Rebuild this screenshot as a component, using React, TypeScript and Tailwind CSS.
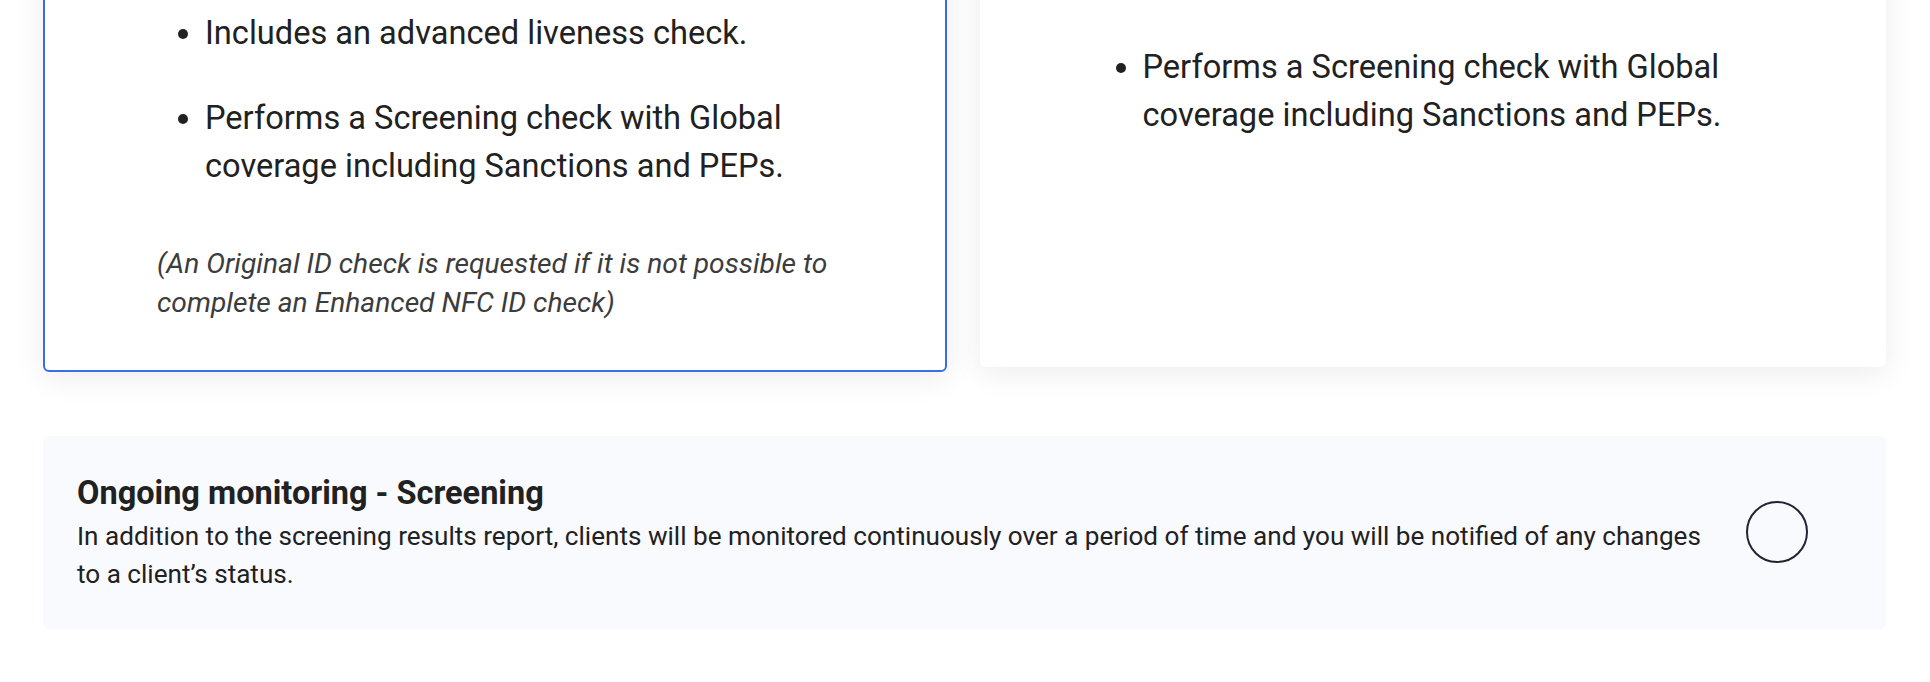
export default function App() {
  return (
    <div className="min-h-screen overflow-hidden bg-white font-['Roboto',sans-serif] text-[#212121]">
      <div className="px-[43px] pr-[44px]">
        <div className="-mt-[40px] flex items-start gap-[33px]">
          <div className="flex-1 rounded-md border-2 border-[#3b6ee6] bg-white pt-[47px] pb-[48px] pl-[112px] pr-[96px] shadow-[0_6px_30px_rgba(0,0,0,0.08)]">
            <ul className="list-disc pl-12 text-[32.6px] leading-[48px]">
              <li>Includes an advanced liveness check.</li>
              <li className="mt-[37px]">Performs a Screening check with Global coverage including Sanctions and PEPs.</li>
            </ul>
            <p className="mt-[54px] text-[28.2px] italic leading-[39px] text-[#3c3c3c]">
              (An Original ID check is requested if it is not possible to complete an Enhanced NFC ID check)
            </p>
          </div>
          <div className="flex-1 rounded-md bg-white pt-[83px] pb-[228px] pl-[115px] pr-[100px] shadow-[0_6px_30px_rgba(0,0,0,0.08)]">
            <ul className="list-disc pl-12 text-[32.6px] leading-[48px]">
              <li>Performs a Screening check with Global coverage including Sanctions and PEPs.</li>
            </ul>
          </div>
        </div>
        <div className="mt-[64px] flex items-center rounded-md bg-[#f9fafe] pt-[34px] pb-[36px] pl-[34px] pr-[78px]">
          <div className="flex-1">
            <h3 className="text-[32.5px] font-bold leading-[47px]">Ongoing monitoring - Screening</h3>
            <p className="text-[26.1px] leading-[38px]">
              In addition to the screening results report, clients will be monitored continuously over a period of time and you will be notified of any changes to a client’s status.
            </p>
          </div>
          <div className="ml-[30px] h-[62px] w-[62px] shrink-0 rounded-full border-2 border-[#1f2433] bg-[#f9fafe]" />
        </div>
      </div>
    </div>
  );
}
